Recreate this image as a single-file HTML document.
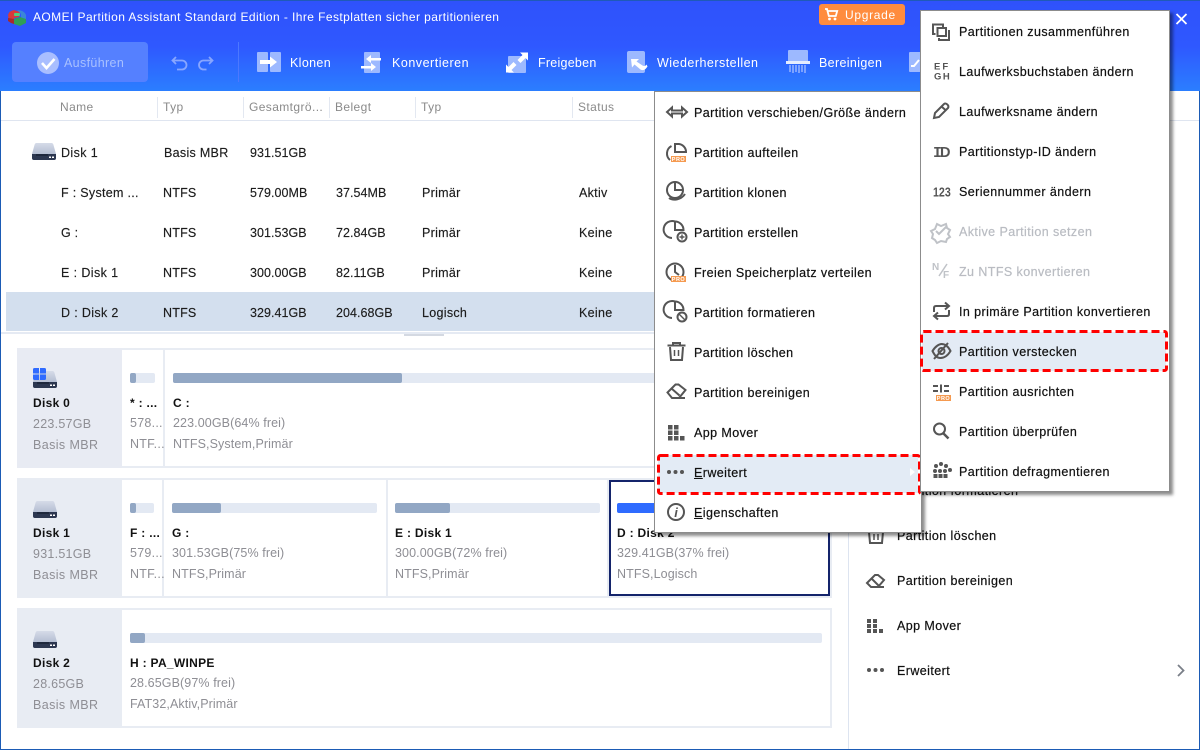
<!DOCTYPE html>
<html lang="de"><head><meta charset="utf-8"><title>AOMEI Partition Assistant</title>
<style>
html,body{margin:0;padding:0;width:1200px;height:750px;overflow:hidden;background:#fff}
body{position:relative;font-family:"Liberation Sans",sans-serif;font-size:13px;color:#1c1c1c}
.a{position:absolute}
.t{position:absolute;white-space:nowrap;line-height:16px;height:16px;letter-spacing:.2px}
.w{color:#fff;font-size:13px;letter-spacing:.35px}
.h{color:#8a8a8a;font-size:12px;letter-spacing:.4px}
.g{color:#8e8e94;font-size:13px;letter-spacing:.25px}
.b{font-weight:bold;color:#111;font-size:12px;letter-spacing:.3px}
.m{color:#111;font-size:12.5px;letter-spacing:.42px;margin-top:1px;-webkit-text-stroke:.2px}
.d{color:#b9bcc2}
.tb{position:absolute;left:0;top:1px;-webkit-text-stroke:.15px}
.sep{position:absolute;top:97px;width:1px;height:21px;background:#e3e8f1}
.bar{position:absolute;height:10px;background:#e3e9f3;border-radius:2px}
.bar i{display:block;height:10px;background:#92a7c4;border-radius:2px}
.menu{position:absolute;background:#fff;border:1px solid #8c8c8c;box-sizing:border-box;box-shadow:3px 3px 3px rgba(0,0,0,.45)}
svg{position:absolute;left:0;top:0;overflow:visible}
</style></head><body>

<!-- header -->
<div class="a" style="left:0;top:0;width:1200px;height:91px;background:linear-gradient(180deg,#2f52fb 0,#2f58ff 50%,#2b7eff 100%);border-top:1px solid #1f5ab8;box-sizing:border-box"></div>
<svg width="1200" height="91">
  <path d="M8 15q1-4 6-5l6 2-1 5-5 1v4l-5-1z" fill="#d8393a"/><path d="M17 10q7 0 9 5v4l-5-1v-4z" fill="#3a86d8"/><path d="M14 19l6-2 6 2v4l-6 3-6-2z" fill="#2f9e57"/><path d="M8 18l6 1v5l-3-1-3-2z" fill="#a82a2c"/><rect x="14" y="13" width="6" height="3" rx="1" fill="#4cd07e"/>
  <rect x="12" y="42" width="136" height="40" rx="4" fill="#5580ff"/>
  <circle cx="48" cy="63" r="11" fill="#a9beff"/><path d="M42 63l4.500 5 8-9" stroke="#fff" stroke-width="2.600" fill="none"/>
  <g stroke="#88a6ff" stroke-width="1.800" fill="none"><path d="M176 57l-3.500 3.500 3.500 3.500M173 60.500h9a4.500 4.500 0 0 1 0 9h-5"/><path d="M209 57l3.500 3.500-3.500 3.500M212.500 60.500h-9a4.500 4.500 0 0 0 0 9h3"/></g>
  <rect x="238" y="42" width="1" height="40" fill="#4c78ff"/>
  <rect x="257" y="52" width="11" height="20" rx="1" fill="#9db9ff"/><rect x="270" y="52" width="11" height="20" rx="1" fill="#9db9ff"/>
  <path d="M260 60h10v-3.500l7 5.500-7 5.500V64h-10z" fill="#fff"/>
  <rect x="364" y="52" width="16" height="21" rx="1" fill="#9db9ff"/>
  <path d="M381 59h-10v-3l-5 4 5 4v-2.500h10zM361 67h10v-3l5 4-5 4v-2.500h-10z" fill="#fff" transform="translate(0 -1)"/>
  <rect x="508" y="56" width="18" height="17" rx="1" fill="#9db9ff"/>
  <path d="M528 53v8l-2.500-2.500-5 5-3-3 5-5L520 53zM506 73v-8l2.500 2.500 5-5 3 3-5 5L514 73z" fill="#fff" transform="translate(0 -.500)"/>
  <rect x="627" y="51" width="18" height="22" rx="2" fill="#9db9ff"/>
  <path d="M631 59h8l-2.500 2.500 6 4c2 1 3 .5 4-1l1 2c-2 3-4 4.500-7 3l-6-5-2.500 3z" fill="#fff"/>
  <path d="M789 50h18a1 1 0 0 1 1 1v10h-20V51a1 1 0 0 1 1-1z" fill="#9db9ff"/>
  <rect x="786" y="61" width="24" height="3" fill="#e4ecff"/>
  <path d="M790 65v7M793 65v8M796 65v7M799 65v8M802 65v7M805 65v8" stroke="#9db9ff" stroke-width="1.400"/>
  <rect x="909" y="52" width="14" height="20" rx="1" fill="#9db9ff"/>
  <path d="M911 66l3 0 5-6" stroke="#fff" stroke-width="2" fill="none"/>
  <rect x="819" y="4" width="86" height="21" rx="3" fill="#ff8c3e"/>
  <path d="M825 9h2l1.800 7h7l1.400-5H828" stroke="#fff" stroke-width="1.800" fill="none"/><circle cx="829.500" cy="19" r="1.400" fill="#fff"/><circle cx="835" cy="19" r="1.400" fill="#fff"/>
  <path d="M1176.500 14l10 10M1186.500 14l-10 10" stroke="#fff" stroke-width="1.800"/>
</svg>
<div class="t w" style="left:33px;top:9px;font-size:12px;letter-spacing:.42px">AOMEI Partition Assistant Standard Edition - Ihre Festplatten sicher partitionieren</div>
<div class="t w" style="left:64px;top:55px;color:#a9c0ff;font-size:12.500px">Ausführen</div>
<div class="t w" style="left:290px;top:55px;font-size:12.500px">Klonen</div>
<div class="t w" style="left:392px;top:55px;font-size:12.500px;letter-spacing:.52px">Konvertieren</div>
<div class="t w" style="left:538px;top:55px;font-size:12.500px;letter-spacing:.25px">Freigeben</div>
<div class="t w" style="left:657px;top:55px;font-size:12.500px;letter-spacing:.48px">Wiederherstellen</div>
<div class="t w" style="left:819px;top:55px;font-size:12.500px">Bereinigen</div>
<div class="t w" style="left:845px;top:7px;font-size:12px;letter-spacing:.7px">Upgrade</div>

<!-- table -->
<div class="a" style="left:0;top:120px;width:1200px;height:1px;background:#dfe5f0"></div>
<div class="sep" style="left:157px"></div><div class="sep" style="left:243px"></div><div class="sep" style="left:329px"></div><div class="sep" style="left:415px"></div><div class="sep" style="left:572px"></div>
<div class="t h" style="left:60px;top:99px">Name</div>
<div class="t h" style="left:163px;top:99px">Typ</div>
<div class="t h" style="left:249px;top:99px">Gesamtgrö...</div>
<div class="t h" style="left:335px;top:99px">Belegt</div>
<div class="t h" style="left:421px;top:99px">Typ</div>
<div class="t h" style="left:578px;top:99px">Status</div>

<div class="a" style="left:6px;top:292px;width:660px;height:39px;background:#d3dfee"></div>
<div class="a" style="left:0;top:332px;width:850px;height:2px;background:#e5eaf3"></div>
<div class="a" style="left:404px;top:334px;width:40px;height:2px;background:#d4d9e2"></div>

<svg width="1200" height="750">
  <defs>
    <linearGradient id="dg" x1="0" y1="0" x2="0" y2="1"><stop offset="0" stop-color="#d5dbe8"/><stop offset="1" stop-color="#a3aec6"/></linearGradient>
    <g id="disk"><path d="M4.500 0H19.500q1.500 0 2 2l2.500 9v4q0 2-2 2H2q-2 0-2-2v-4l2.500-9q.500-2 2-2z" fill="url(#dg)"/><path d="M0 11h24v4q0 2-2 2H2q-2 0-2-2z" fill="#2c3750"/><rect x="17" y="13.500" width="2" height="1.500" fill="#fff"/><rect x="20" y="13.500" width="2" height="1.500" fill="#fff"/><rect x="4" y="11.500" width="12" height="1" fill="#10182a"/></g>
  </defs>
  <use href="#disk" x="32" y="143"/>
</svg>
<div class="tb">
<div class="t" style="left:61px;top:144px;font-size:12.500px;letter-spacing:.4px">Disk 1</div>
<div class="t" style="left:164px;top:144px;font-size:12.500px;letter-spacing:.3px">Basis MBR</div>
<div class="t" style="left:250px;top:144px;font-size:12.500px;letter-spacing:.05px">931.51GB</div>
<div class="t" style="left:61px;top:184px;font-size:12.500px;letter-spacing:.3px">F : System ...</div>
<div class="t" style="left:163px;top:184px;font-size:12.500px;letter-spacing:.2px">NTFS</div>
<div class="t" style="left:250px;top:184px;font-size:12.500px;letter-spacing:.05px">579.00MB</div>
<div class="t" style="left:336px;top:184px;font-size:12.500px;letter-spacing:.05px">37.54MB</div>
<div class="t" style="left:422px;top:184px;font-size:12.500px;letter-spacing:.3px">Primär</div>
<div class="t" style="left:579px;top:184px;font-size:12.500px;letter-spacing:.3px">Aktiv</div>
<div class="t" style="left:61px;top:224px;font-size:12.500px">G :</div>
<div class="t" style="left:163px;top:224px;font-size:12.500px;letter-spacing:.2px">NTFS</div>
<div class="t" style="left:250px;top:224px;font-size:12.500px;letter-spacing:.05px">301.53GB</div>
<div class="t" style="left:336px;top:224px;font-size:12.500px;letter-spacing:.05px">72.84GB</div>
<div class="t" style="left:422px;top:224px;font-size:12.500px;letter-spacing:.3px">Primär</div>
<div class="t" style="left:579px;top:224px;font-size:12.500px;letter-spacing:.3px">Keine</div>
<div class="t" style="left:61px;top:264px;font-size:12.500px;letter-spacing:.4px">E : Disk 1</div>
<div class="t" style="left:163px;top:264px;font-size:12.500px;letter-spacing:.2px">NTFS</div>
<div class="t" style="left:250px;top:264px;font-size:12.500px;letter-spacing:.05px">300.00GB</div>
<div class="t" style="left:336px;top:264px;font-size:12.500px;letter-spacing:.05px">82.11GB</div>
<div class="t" style="left:422px;top:264px;font-size:12.500px;letter-spacing:.3px">Primär</div>
<div class="t" style="left:579px;top:264px;font-size:12.500px;letter-spacing:.3px">Keine</div>
<div class="t" style="left:61px;top:304px;font-size:12.500px;letter-spacing:.35px">D : Disk 2</div>
<div class="t" style="left:163px;top:304px;font-size:12.500px;letter-spacing:.2px">NTFS</div>
<div class="t" style="left:250px;top:304px;font-size:12.500px;letter-spacing:.05px">329.41GB</div>
<div class="t" style="left:336px;top:304px;font-size:12.500px;letter-spacing:.05px">204.68GB</div>
<div class="t" style="left:422px;top:304px;font-size:12.500px;letter-spacing:.3px">Logisch</div>
<div class="t" style="left:579px;top:304px;font-size:12.500px;letter-spacing:.3px">Keine</div>
</div>

<!-- disk cards -->
<div class="a" style="left:17px;top:348px;width:815px;height:120px;background:#e8ecf3"></div>
<div class="a" style="left:17px;top:348px;width:105px;height:120px;background:#e8ebf3"></div>
<div class="a" style="left:122px;top:350px;width:41px;height:116px;background:#fff"></div>
<div class="a" style="left:165px;top:350px;width:665px;height:116px;background:#fff"></div>

<div class="a" style="left:17px;top:478px;width:815px;height:120px;background:#e8ecf3"></div>
<div class="a" style="left:122px;top:480px;width:40px;height:116px;background:#fff"></div>
<div class="a" style="left:164px;top:480px;width:222px;height:116px;background:#fff"></div>
<div class="a" style="left:388px;top:480px;width:219px;height:116px;background:#fff"></div>
<div class="a" style="left:609px;top:480px;width:221px;height:116px;background:#fff;border:2px solid #14246b;box-sizing:border-box"></div>

<div class="a" style="left:17px;top:608px;width:815px;height:120px;background:#e8ecf3"></div>
<div class="a" style="left:122px;top:610px;width:708px;height:116px;background:#fff"></div>

<div class="bar" style="left:130px;top:373px;width:25px"><i style="width:6px"></i></div>
<div class="bar" style="left:173px;top:373px;width:650px"><i style="width:229px"></i></div>
<div class="bar" style="left:130px;top:503px;width:24px"><i style="width:6px"></i></div>
<div class="bar" style="left:172px;top:503px;width:205px"><i style="width:49px"></i></div>
<div class="bar" style="left:395px;top:503px;width:205px"><i style="width:55px"></i></div>
<div class="bar" style="left:617px;top:503px;width:205px"><i style="width:129px;background:#2f6bff"></i></div>
<div class="bar" style="left:130px;top:633px;width:692px"><i style="width:15px"></i></div>

<svg width="1200" height="750">
  <use href="#disk" x="33" y="371"/>
  <path d="M33 369.500q0-1.500 1.500-1.500h4.500v5.500h-6zM40 368h4.500q1.500 0 1.500 1.500v4h-6zM33 374.500h6v5.500h-4.500q-1.500 0-1.500-1.500zM40 374.500h6v4q0 1.500-1.500 1.500H40z" fill="#2f6bff"/>
  <use href="#disk" x="33" y="501"/>
  <use href="#disk" x="33" y="631"/>
</svg>
<div class="t b" style="left:33px;top:395px">Disk 0</div>
<div class="t g" style="left:33px;top:416px;font-size:12.500px">223.57GB</div>
<div class="t g" style="left:33px;top:437px;font-size:12.500px;letter-spacing:.4px">Basis MBR</div>
<div class="t b" style="left:33px;top:525px">Disk 1</div>
<div class="t g" style="left:33px;top:546px;font-size:12.500px">931.51GB</div>
<div class="t g" style="left:33px;top:567px;font-size:12.500px;letter-spacing:.4px">Basis MBR</div>
<div class="t b" style="left:33px;top:655px">Disk 2</div>
<div class="t g" style="left:33px;top:676px;font-size:12.500px">28.65GB</div>
<div class="t g" style="left:33px;top:697px;font-size:12.500px;letter-spacing:.4px">Basis MBR</div>

<div class="t b" style="left:130px;top:395px">* : ...</div>
<div class="t g" style="left:130px;top:415px;font-size:12.500px">578...</div>
<div class="t g" style="left:130px;top:436px;font-size:12.500px">NTF...</div>
<div class="t b" style="left:173px;top:395px">C :</div>
<div class="t g" style="left:173px;top:415px;font-size:12.500px;letter-spacing:.1px">223.00GB(64% frei)</div>
<div class="t g" style="left:173px;top:436px;font-size:12.500px;letter-spacing:.1px">NTFS,System,Primär</div>

<div class="t b" style="left:130px;top:525px">F : ...</div>
<div class="t g" style="left:130px;top:545px;font-size:12.500px">579...</div>
<div class="t g" style="left:130px;top:566px;font-size:12.500px">NTF...</div>
<div class="t b" style="left:172px;top:525px">G :</div>
<div class="t g" style="left:172px;top:545px;font-size:12.500px;letter-spacing:.1px">301.53GB(75% frei)</div>
<div class="t g" style="left:172px;top:566px;font-size:12.500px;letter-spacing:.1px">NTFS,Primär</div>
<div class="t b" style="left:395px;top:525px">E : Disk 1</div>
<div class="t g" style="left:395px;top:545px;font-size:12.500px;letter-spacing:.1px">300.00GB(72% frei)</div>
<div class="t g" style="left:395px;top:566px;font-size:12.500px;letter-spacing:.1px">NTFS,Primär</div>
<div class="t b" style="left:617px;top:525px">D : Disk 2</div>
<div class="t g" style="left:617px;top:545px;font-size:12.500px;letter-spacing:.1px">329.41GB(37% frei)</div>
<div class="t g" style="left:617px;top:566px;font-size:12.500px;letter-spacing:.1px">NTFS,Logisch</div>
<div class="t b" style="left:130px;top:655px">H : PA_WINPE</div>
<div class="t g" style="left:130px;top:675px;font-size:12.500px;letter-spacing:.1px">28.65GB(97% frei)</div>
<div class="t g" style="left:130px;top:696px;font-size:12.500px;letter-spacing:.1px">FAT32,Aktiv,Primär</div>

<!-- right panel -->
<div class="a" style="left:848px;top:91px;width:1px;height:659px;background:#dde4f0"></div>
<svg width="1200" height="750">
  <g transform="translate(876 536)" fill="none" stroke="#555" stroke-width="2"><path d="M-7-4l1 11H6L7-4M-9-6H9"/><path d="M-2-2v6M2-2v6" stroke-width="1.500"/></g>
  <g transform="translate(876 581)" fill="none" stroke="#555" stroke-width="2"><path d="M-9 2L-1-6 H2L8-1 2 6H-5zM-5 6H8M-4-2L3 5"/></g>
  <g transform="translate(876 626)" fill="#555"><rect x="-9" y="-7" width="4" height="4"/><rect x="-3" y="-7" width="4" height="4"/><rect x="-9" y="-2" width="4" height="4"/><rect x="-3" y="-2" width="4" height="4"/><rect x="-9" y="3" width="4" height="4"/><rect x="-3" y="3" width="4" height="4"/><rect x="3" y="3" width="4" height="4"/></g>
  <g fill="#555"><circle cx="869" cy="670" r="2"/><circle cx="875.500" cy="670" r="2"/><circle cx="882" cy="670" r="2"/></g>
  <path d="M1178 665l5.500 5.500-5.500 5.500" stroke="#7a7f88" stroke-width="1.800" fill="none"/>
</svg>
<div class="t m" style="left:897px;top:482px">Partition formatieren</div>
<div class="t m" style="left:897px;top:527px">Partition löschen</div>
<div class="t m" style="left:897px;top:572px">Partition bereinigen</div>
<div class="t m" style="left:897px;top:617px">App Mover</div>
<div class="t m" style="left:897px;top:662px">Erweitert</div>

<!-- window frame -->
<div class="a" style="left:0;top:91px;width:1px;height:659px;background:#1b5bb5"></div>
<div class="a" style="left:1199px;top:91px;width:1px;height:659px;background:#1b5bb5"></div>
<div class="a" style="left:0;top:749px;width:1200px;height:1px;background:#1b5bb5"></div>

<!-- menu 1 -->
<div class="menu" style="left:654px;top:91px;width:268px;height:442px"></div>
<div class="a" style="left:658px;top:455px;width:260px;height:38px;background:#e3ebf5"></div>
<svg width="1200" height="750">
  <path d="M910 468l5 4-5 4z" fill="#fff"/>
  <rect x="658.500" y="455.500" width="261" height="38" rx="2" fill="none" stroke="#f00" stroke-width="3" stroke-dasharray="8 4"/>
  <g fill="none" stroke="#555" stroke-width="2">
    <path d="M667 112l5-4.500v3h10v-3l5 4.500-5 4.500v-3h-10v3z"/>
    <!-- split -->
    <path d="M671.500 146A8.500 8.500 0 0 0 670 160"/><path d="M675 152v-8h4a8 8 0 0 1 7 8z"/>
    <!-- clone -->
    <circle cx="675" cy="190" r="8"/><path d="M675 182v8h8"/><path d="M669 198c4 3 12 2 16-4"/>
    <!-- create -->
    <path d="M675 221.500A8.500 8.500 0 1 0 672 238"/><path d="M675 221.500V230H683.500A8.500 8.500 0 0 0 675 221.500z"/><circle cx="682" cy="237" r="4.500" fill="#fff"/><path d="M679.500 237h5M682 234.500v5" stroke-width="1.400"/>
    <!-- distribute -->
    <circle cx="675" cy="272" r="8.500"/><path d="M675 265v7l4 3"/>
    <!-- format -->
    <path d="M675 301.500A8.500 8.500 0 1 0 672 318"/><path d="M675 301.500V310H683.500A8.500 8.500 0 0 0 675 301.500z"/><circle cx="682" cy="317" r="4.500" fill="#fff"/><path d="M679 314l6 6" stroke-width="1.400"/>
    <!-- trash -->
    <path d="M670 347l1 13h11l1-13M667.500 345.500h18M673 345v-2h7v2"/><path d="M674.500 350v6M678.500 350v6" stroke-width="1.500"/>
    <!-- eraser -->
    <path d="M667.500 392.500l8-8h3l7 5.500-6.500 8h-7zM672 398h13M671.500 388.500l8 7"/>
    <!-- info -->
    <circle cx="676" cy="512" r="8"/>
  </g>
  <rect x="671" y="156" width="15" height="6" fill="#f59a50"/><text x="678.500" y="161" font-size="5.500" font-weight="bold" fill="#fff" text-anchor="middle" font-family="Liberation Sans" letter-spacing=".5">PRO</text>
  <rect x="671" y="276" width="15" height="6" fill="#f59a50"/><text x="678.500" y="281" font-size="5.500" font-weight="bold" fill="#fff" text-anchor="middle" font-family="Liberation Sans" letter-spacing=".5">PRO</text>
  <g fill="#555"><rect x="668" y="425" width="4.500" height="4.500"/><rect x="674" y="425" width="4.500" height="4.500"/><rect x="668" y="430.500" width="4.500" height="4.500"/><rect x="674" y="430.500" width="4.500" height="4.500"/><rect x="668" y="436" width="4.500" height="4.500"/><rect x="674" y="436" width="4.500" height="4.500"/><rect x="680" y="436" width="4.500" height="4.500"/>
  <circle cx="669" cy="472" r="2"/><circle cx="675.500" cy="472" r="2"/><circle cx="682" cy="472" r="2"/></g>
  <text x="676" y="517" font-size="13" font-style="italic" font-weight="bold" fill="#555" text-anchor="middle" font-family="Liberation Sans">i</text>
</svg>
<div class="t m" style="left:694px;top:104px">Partition verschieben/Größe ändern</div>
<div class="t m" style="left:694px;top:144px">Partition aufteilen</div>
<div class="t m" style="left:694px;top:184px">Partition klonen</div>
<div class="t m" style="left:694px;top:224px">Partition erstellen</div>
<div class="t m" style="left:694px;top:264px">Freien Speicherplatz verteilen</div>
<div class="t m" style="left:694px;top:304px">Partition formatieren</div>
<div class="t m" style="left:694px;top:344px">Partition löschen</div>
<div class="t m" style="left:694px;top:384px">Partition bereinigen</div>
<div class="t m" style="left:694px;top:424px">App Mover</div>
<div class="t m" style="left:694px;top:464px"><u>E</u>rweitert</div>
<div class="t m" style="left:694px;top:504px"><u>E</u>igenschaften</div>

<!-- menu 2 -->
<div class="menu" style="left:920px;top:10px;width:250px;height:482px"></div>
<div class="a" style="left:922px;top:332px;width:244px;height:39px;background:#e3ebf5"></div>
<svg width="1200" height="750">
  <rect x="921.500" y="331.500" width="245" height="39" rx="2" fill="none" stroke="#f00" stroke-width="3" stroke-dasharray="8 4"/>
  <g fill="none" stroke="#555" stroke-width="2">
    <!-- merge -->
    <path d="M935.500 34H933V24.500H943V27"/><rect x="937.500" y="28" width="8.500" height="8"/><path d="M949 30V40H939V38"/>
    <!-- pencil -->
    <path d="M934 118l1-5 9-9c2-1.500 5.500 1.500 4 4l-9 9zM941.500 106.500l4.500 4"/>
    <!-- swap -->
    <path d="M934 312v-4q0-2 2-2h13M945 302.500l4 3.500-4 3.500M949 310v4q0 2-2 2h-13M938 312.500l-4 3.500 4 3.500"/>
    <!-- eye -->
    <path d="M932.500 351c3-5 7-7 9-7 4 0 7 3 9 7-3 5-6 7-10 7-4 0-6-3-8-7z"/><circle cx="941.500" cy="351" r="3"/><path d="M934 359l14-16"/>
    <!-- align -->
    <path d="M933 386h5M933 391h5M944 386h5M944 391h5M941 384.500v8"/>
    <!-- search -->
    <circle cx="939.500" cy="429" r="5.500"/><path d="M943.500 433.500l5 5" stroke-width="2.500"/>
    <!-- gear check -->
    <path d="M937 224l4 2 5-2 1 4 3 2-2 4 2 3-3 2-1 3-5-1-4 2-2-3-3-2 1-4-2-3 4-2z" stroke="#bfc2c7"/><path d="M936 231l3 3 8-8" stroke="#bfc2c7"/>
  </g>
  <text x="934" y="69.500" font-size="9.500" font-weight="bold" fill="#555" font-family="Liberation Sans" letter-spacing="2">EF</text>
  <text x="934" y="79.500" font-size="9.500" font-weight="bold" fill="#555" font-family="Liberation Sans" letter-spacing="1.500">GH</text>
  <text x="933" y="157" font-size="15" fill="#555" font-family="Liberation Mono" font-weight="bold">I</text>
  <text x="940" y="157" font-size="14.500" fill="#555" font-family="Liberation Sans" font-weight="bold">D</text>
  <text transform="translate(933 196.500) scale(.82 1)" font-size="13" fill="#555" font-family="Liberation Sans" font-weight="bold">123</text>
  <text x="932" y="270" font-size="10" fill="#bfc2c7" font-family="Liberation Sans" font-weight="bold">N</text>
  <path d="M939 276l8-12" stroke="#bfc2c7" stroke-width="1.500"/>
  <text x="943" y="278" font-size="10" fill="#bfc2c7" font-family="Liberation Sans" font-weight="bold">F</text>
  <rect x="936" y="395" width="15" height="6" fill="#f59a50"/><text x="943.500" y="400" font-size="5.500" font-weight="bold" fill="#fff" text-anchor="middle" font-family="Liberation Sans" letter-spacing=".5">PRO</text>
  <g fill="#555"><circle cx="936" cy="466" r="2"/><circle cx="941" cy="464" r="2"/><circle cx="946" cy="466" r="2"/><circle cx="935" cy="471" r="2"/><circle cx="940" cy="471" r="2"/><circle cx="945" cy="471" r="2"/><circle cx="950" cy="470" r="2"/><rect x="933.500" y="474" width="4" height="4"/><rect x="938.500" y="474" width="4" height="4"/><rect x="943.500" y="474" width="4" height="4"/></g>
</svg>
<div class="t m" style="left:959px;top:23px">Partitionen zusammenführen</div>
<div class="t m" style="left:959px;top:63px">Laufwerksbuchstaben ändern</div>
<div class="t m" style="left:959px;top:103px">Laufwerksname ändern</div>
<div class="t m" style="left:959px;top:143px">Partitionstyp-ID ändern</div>
<div class="t m" style="left:959px;top:183px">Seriennummer ändern</div>
<div class="t m d" style="left:959px;top:223px">Aktive Partition setzen</div>
<div class="t m d" style="left:959px;top:263px">Zu NTFS konvertieren</div>
<div class="t m" style="left:959px;top:303px">In primäre Partition konvertieren</div>
<div class="t m" style="left:959px;top:343px">Partition verstecken</div>
<div class="t m" style="left:959px;top:383px">Partition ausrichten</div>
<div class="t m" style="left:959px;top:423px">Partition überprüfen</div>
<div class="t m" style="left:959px;top:463px">Partition defragmentieren</div>
</body></html>
